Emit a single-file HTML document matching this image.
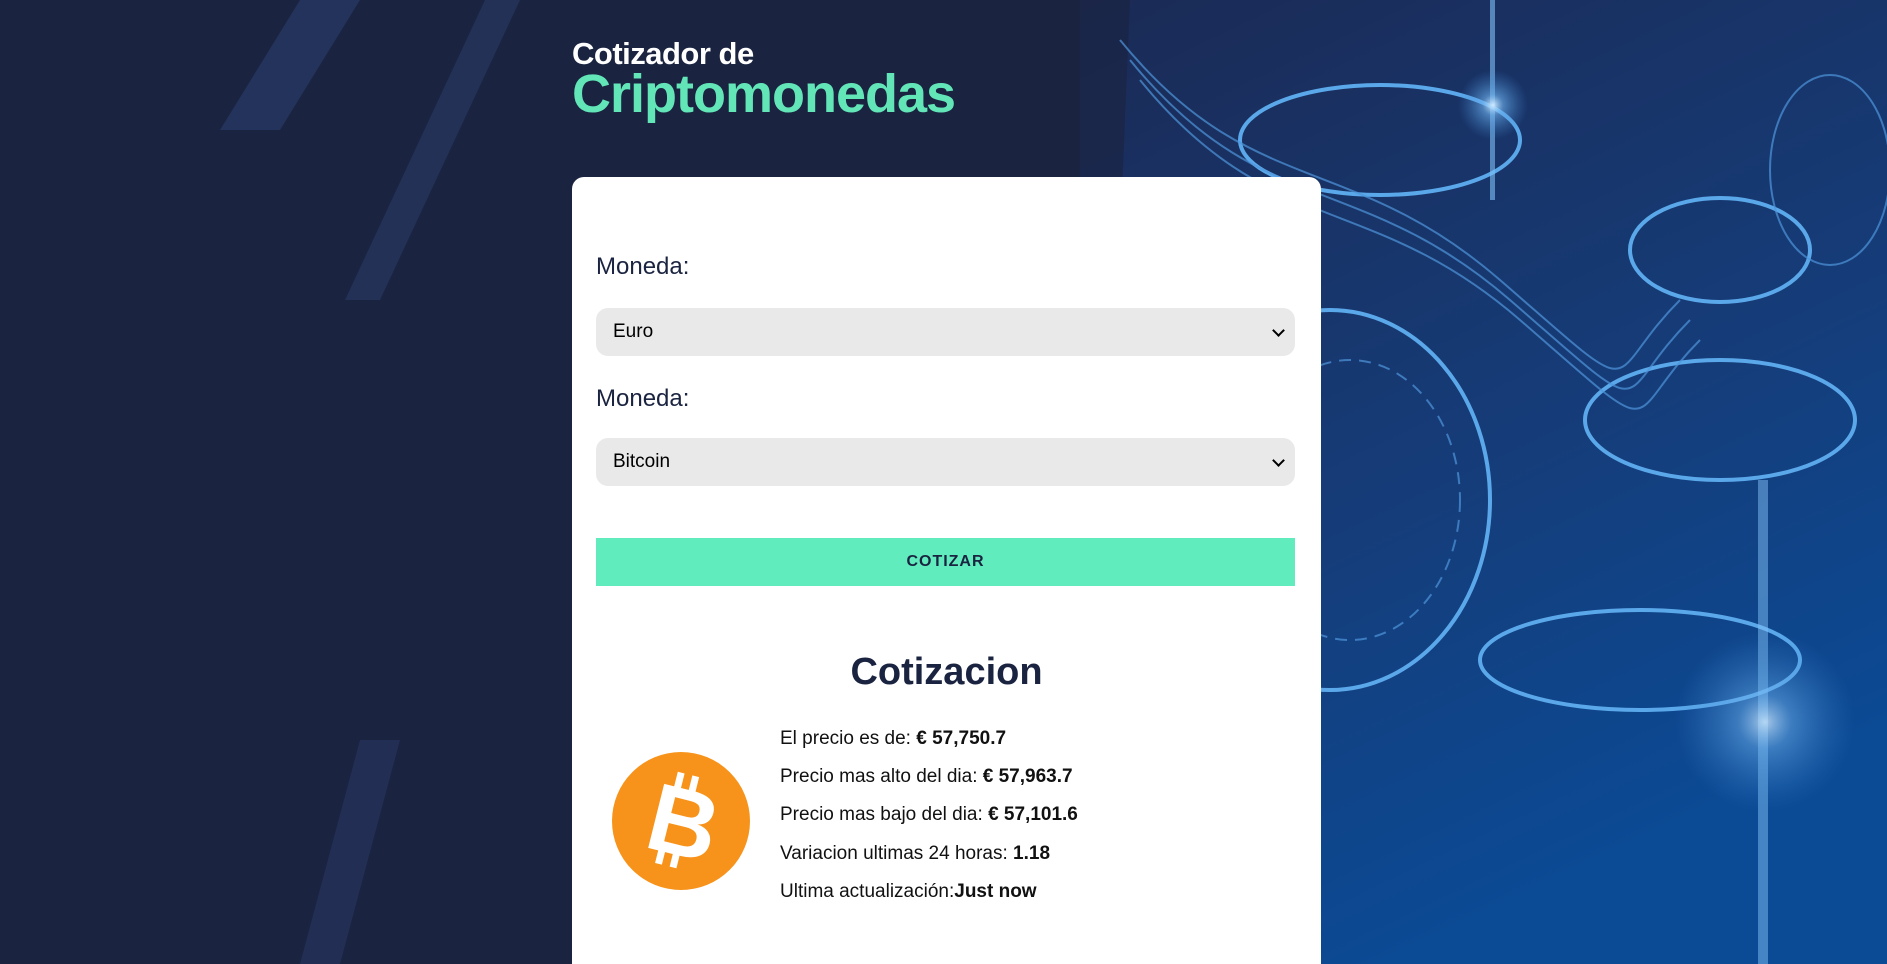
<!DOCTYPE html>
<html><head><meta charset="utf-8"><style>
*{box-sizing:border-box;margin:0;padding:0}
html,body{width:1887px;height:964px;overflow:hidden}
body{background:#1a2340;font-family:"Liberation Sans",sans-serif;position:relative}
#bg{position:absolute;left:0;top:0}
h1{position:absolute;left:572px;top:38px;color:#fff;font-weight:bold;line-height:1}
h1 .a{display:block;font-size:31px;letter-spacing:-0.5px}
h1 .b{display:block;font-size:54px;color:#62e6b8;margin-top:-2px;letter-spacing:-1px}
.card{position:absolute;left:572px;top:177px;width:749px;height:787px;background:#fff;border-radius:12px 12px 0 0}
label{position:absolute;left:24px;font-size:24px;color:#1a2340}
.sel{position:absolute;left:24px;width:699px;height:48px;background:#e9e9e9;border-radius:12px;font-size:19px;color:#000;padding:13px 17px}
.sel:after{content:"";position:absolute;right:12px;top:18px;width:7px;height:7px;border-right:2px solid #000;border-bottom:2px solid #000;transform:rotate(45deg)}
.btn{position:absolute;left:24px;top:361px;width:699px;height:48px;background:#61ecbe;text-align:center;line-height:48px;font-weight:bold;font-size:16px;color:#1a2340;letter-spacing:1px}
h2{position:absolute;left:0;width:749px;top:474px;text-align:center;font-size:38px;color:#1a2340}
.lines{position:absolute;left:208px;top:551px;font-size:19px;color:#111}
.lines p{height:38.2px}
</style></head><body>
<svg id="bg" width="1887" height="964" viewBox="0 0 1887 964">
<defs>
<linearGradient id="g" x1="0" y1="0" x2="0.4" y2="1"><stop offset="0" stop-color="#1b2a55"/><stop offset="0.6" stop-color="#153d7a"/><stop offset="1" stop-color="#0b4a95"/></linearGradient>
<radialGradient id="gl"><stop offset="0" stop-color="#cfeaff"/><stop offset="0.3" stop-color="#6fb3f0" stop-opacity=".6"/><stop offset="1" stop-color="#3d86d0" stop-opacity="0"/></radialGradient>
</defs>
<rect x="1080" y="0" width="807" height="964" fill="url(#g)"/>
<polygon points="1080,0 1130,0 1090,964 1080,964" fill="#1a2340" opacity=".6"/>
<polygon points="220,130 280,130 360,0 300,0" fill="#2a3a66" opacity=".7"/>
<polygon points="345,300 380,300 520,0 485,0" fill="#2a3a66" opacity=".6"/>
<polygon points="300,964 340,964 400,740 360,740" fill="#2a3a66" opacity=".5"/>
<g fill="none" stroke="#5aa8ea" stroke-width="4">
<ellipse cx="1380" cy="140" rx="140" ry="55"/>
<ellipse cx="1330" cy="500" rx="160" ry="190"/>
<ellipse cx="1720" cy="250" rx="90" ry="52"/>
<ellipse cx="1720" cy="420" rx="135" ry="60"/>
<ellipse cx="1640" cy="660" rx="160" ry="50"/>
</g>
<g fill="none" stroke="#4f96dc" stroke-width="2" opacity=".7">
<ellipse cx="1350" cy="500" rx="110" ry="140" stroke-dasharray="12 8"/>
<ellipse cx="1830" cy="170" rx="60" ry="95"/>
<path d="M1120 40 C1250 200 1350 150 1500 280 S1600 380 1680 300" />
<path d="M1130 60 C1260 220 1360 170 1510 300 S1610 400 1690 320" />
<path d="M1140 80 C1270 240 1370 190 1520 320 S1620 420 1700 340" />
</g>
<rect x="1490" y="0" width="5" height="200" fill="#7fc0f5" opacity=".6"/>
<rect x="1758" y="480" width="10" height="484" fill="#7fc0f5" opacity=".5"/>
<circle cx="1493" cy="105" r="35" fill="url(#gl)"/>
<circle cx="1765" cy="722" r="90" fill="url(#gl)" opacity=".8"/>
</svg>
<h1><span class="a">Cotizador de</span><span class="b">Criptomonedas</span></h1>
<div class="card">
<label style="top:76px">Moneda:</label>
<div class="sel" style="top:131px">Euro</div>
<label style="top:208px">Moneda:</label>
<div class="sel" style="top:261px">Bitcoin</div>
<div class="btn">COTIZAR</div>
<h2>Cotizacion</h2>
<svg style="position:absolute;left:40px;top:575px" width="138" height="138" viewBox="0 0 138 138">
<circle cx="69" cy="69" r="69" fill="#f7931a"/>
<text x="72" y="103" text-anchor="middle" font-family="Liberation Sans" font-weight="bold" font-size="96" fill="#fff" transform="rotate(14 69 69)">B</text>
<rect x="54" y="22" width="7" height="16" fill="#fff" transform="rotate(14 69 69)"/>
<rect x="69" y="22" width="7" height="16" fill="#fff" transform="rotate(14 69 69)"/>
<rect x="54" y="100" width="7" height="16" fill="#fff" transform="rotate(14 69 69)"/>
<rect x="69" y="100" width="7" height="16" fill="#fff" transform="rotate(14 69 69)"/>
</svg>
<div class="lines">
<p>El precio es de: <b>€ 57,750.7</b></p>
<p>Precio mas alto del dia: <b>€ 57,963.7</b></p>
<p>Precio mas bajo del dia: <b>€ 57,101.6</b></p>
<p>Variacion ultimas 24 horas: <b>1.18</b></p>
<p>Ultima actualización:<b>Just now</b></p>
</div>
</div>
</body></html>
